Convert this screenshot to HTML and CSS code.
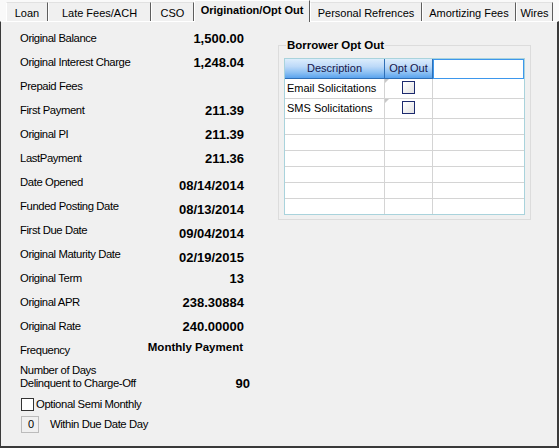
FILE: index.html
```html
<!DOCTYPE html>
<html>
<head>
<meta charset="utf-8">
<link rel="stylesheet" href="styles.css">
</head>
<body>
<div class="tabs">
  <div class="tab w-loan">Loan</div>
  <div class="tab w-late">Late Fees/ACH</div>
  <div class="tab w-cso">CSO</div>
  <div class="tab tab-sel w-orig">Origination/Opt Out</div>
  <div class="tab w-pers">Personal Refrences</div>
  <div class="tab w-amort">Amortizing Fees</div>
  <div class="tab w-wires">Wires</div>
</div>
<div class="panel">
  <div class="left">
    <div class="row"><span class="lbl">Original Balance</span><span class="val">1,500.00</span></div>
    <div class="row"><span class="lbl">Original Interest Charge</span><span class="val">1,248.04</span></div>
    <div class="row"><span class="lbl">Prepaid Fees</span><span class="val"></span></div>
    <div class="row"><span class="lbl">First Payment</span><span class="val">211.39</span></div>
    <div class="row"><span class="lbl">Original PI</span><span class="val">211.39</span></div>
    <div class="row"><span class="lbl">LastPayment</span><span class="val">211.36</span></div>
    <div class="row"><span class="lbl">Date Opened</span><span class="val low">08/14/2014</span></div>
    <div class="row"><span class="lbl">Funded Posting Date</span><span class="val low">08/13/2014</span></div>
    <div class="row"><span class="lbl">First Due Date</span><span class="val low">09/04/2014</span></div>
    <div class="row"><span class="lbl">Original Maturity Date</span><span class="val low">02/19/2015</span></div>
    <div class="row"><span class="lbl">Original Term</span><span class="val">13</span></div>
    <div class="row"><span class="lbl">Original APR</span><span class="val">238.30884</span></div>
    <div class="row"><span class="lbl">Original Rate</span><span class="val">240.00000</span></div>
    <div class="row row-freq"><span class="lbl">Frequency</span><span class="val val-small">Monthly Payment</span></div>
    <div class="row row-multi"><span class="lbl lbl-multi">Number of Days<br>Delinquent to Charge-Off</span><span class="val val-bottom">90</span></div>
    <div class="chkrow"><span class="chk"></span><span class="lbl">Optional Semi Monthly</span></div>
    <div class="inrow"><span class="numbox">0</span><span class="lbl">Within Due Date Day</span></div>
  </div>
  <div class="right">
    <div class="group">
      <div class="group-title">Borrower Opt Out</div>
      <div class="grid">
        <div class="grow ghead">
          <div class="c1 hcell">Description</div>
          <div class="c2 hcell">Opt Out</div>
          <div class="c3 hsel"></div>
        </div>
        <div class="grow gdata">
          <div class="c1 txt">Email Solicitations</div>
          <div class="c2 mark"><span class="gchk"></span></div>
          <div class="c3"></div>
        </div>
        <div class="grow gdata">
          <div class="c1 txt">SMS Solicitations</div>
          <div class="c2 mark"><span class="gchk"></span></div>
          <div class="c3"></div>
        </div>
        <div class="grow gempty"><div class="c1"></div><div class="c2"></div><div class="c3"></div></div>
        <div class="grow gempty"><div class="c1"></div><div class="c2"></div><div class="c3"></div></div>
        <div class="grow gempty"><div class="c1"></div><div class="c2"></div><div class="c3"></div></div>
        <div class="grow gempty"><div class="c1"></div><div class="c2"></div><div class="c3"></div></div>
        <div class="grow gempty"><div class="c1"></div><div class="c2"></div><div class="c3"></div></div>
        <div class="grow gempty glast"><div class="c1"></div><div class="c2"></div><div class="c3"></div></div>
      </div>
    </div>
  </div>
</div>
</body>
</html>
```
FILE: styles.css
```css
* { box-sizing: border-box; }
html, body {
  margin: 0;
  padding: 0;
}
body {
  width: 559px;
  height: 448px;
  overflow: hidden;
  background: #f0f0f0;
  font-family: "Liberation Sans", Arial, sans-serif;
  font-size: 11px;
  color: #000;
  display: flex;
  flex-direction: column;
}

/* Tabs */
.tabs {
  height: 21px;
  flex: none;
  display: flex;
  align-items: flex-end;
  padding-left: 6px;
  background: #f9f9f9;
}
.tab {
  flex: none;
  height: 19px;
  padding-top: 3px;
  line-height: 14px;
  text-align: center;
  white-space: nowrap;
  background: #f0f0f0;
  border-top: 1px solid #e1e1e1;
  border-left: 1px solid #ffffff;
  border-right: 1px solid #5e5e5e;
}
.tab-sel {
  height: 22px;
  margin-bottom: -1px;
  padding-top: 2px;
  font-weight: bold;
  border-top: 1px solid #ffffff;
  position: relative;
  z-index: 1;
}
.w-loan { width: 42px; }
.w-late { width: 103px; }
.w-cso { width: 43px; }
.w-orig { width: 116px; }
.w-pers { width: 112px; }
.w-amort { width: 94px; }
.w-wires { width: 37px; }

/* Panel */
.panel {
  flex: 1;
  display: flex;
  align-items: flex-start;
  border-top: 1px solid #ffffff;
  border-left: 1px solid #3a3a3a;
  border-right: 2px solid #3a3a3a;
  border-bottom: 2px solid #3a3a3a;
  background: #f0f0f0;
}

.left {
  width: 250px;
  flex: none;
  padding-top: 4px;
}
.row {
  height: 24px;
  display: flex;
  justify-content: space-between;
  align-items: center;
  padding-left: 19px;
  padding-right: 7px;
}
.lbl {
  font-size: 11.3px;
  letter-spacing: -0.4px;
  white-space: nowrap;
}
.val {
  font-size: 13px;
  font-weight: bold;
  white-space: nowrap;
}
.val.low { padding-top: 6px; }
.val-small {
  font-size: 11.5px;
  padding-bottom: 6px;
  padding-right: 1px;
}
.row-multi {
  height: 26px;
  margin-top: 2px;
  align-items: flex-end;
  padding-right: 1px;
}
.lbl-multi { line-height: 13px; }
.val-bottom { line-height: 13px; }

.chkrow {
  margin-top: 4px;
  height: 20px;
  display: flex;
  align-items: center;
  padding-left: 20px;
}
.chk {
  width: 13px;
  height: 13px;
  border: 1px solid #333333;
  background: #ffffff;
  margin-right: 2px;
  flex: none;
}
.inrow {
  height: 20px;
  display: flex;
  align-items: center;
  padding-left: 20px;
}
.numbox {
  width: 18px;
  height: 17px;
  flex: none;
  border: 1px solid #bcbcbc;
  background: #f0f0f0;
  text-align: right;
  padding-right: 4px;
  line-height: 15px;
  font-size: 11px;
  margin-right: 11px;
}

/* Right group */
.right {
  margin-left: 27px;
  margin-top: 23px;
  flex: none;
}
.group {
  width: 253px;
  border: 1px solid #dcdcdc;
  padding: 0 5px 4px 5px;
}
.group-title {
  width: fit-content;
  margin-top: -8px;
  margin-left: 2px;
  padding: 0 1px;
  height: 14px;
  line-height: 14px;
  font-size: 11.5px;
  font-weight: bold;
  background: #f0f0f0;
}
.grid {
  margin-top: 6px;
  width: 241px;
  border: 1px solid #a9d3dc;
  background: #ffffff;
}
.grow {
  display: flex;
}
.c1 { width: 100px; border-right: 1px solid #d4d4d4; flex: none; }
.c2 { width: 48px; border-right: 1px solid #d4d4d4; flex: none; }
.c3 { flex: 1; }

.ghead { height: 20px; }
.hcell {
  height: 20px;
  text-align: center;
  line-height: 19px;
  color: #15154a;
  background: linear-gradient(to bottom, #dcedfc 0%, #bcd9f8 40%, #8cc0f3 72%, #5aa3ee 100%);
  border-right: 1px solid #2f6fb6;
  border-bottom: 1px solid #2f6fb6;
}
.hsel {
  height: 20px;
  border: 1px solid #3d97ec;
  background: #ffffff;
}

.gdata { height: 20px; border-bottom: 1px solid #d4d4d4; }
.gdata .c1, .gdata .c2, .gdata .c3 { height: 19px; }
.txt {
  padding-left: 2px;
  padding-top: 1px;
  line-height: 16px;
  white-space: nowrap;
}
.mark {
  position: relative;
  display: flex;
  justify-content: center;
  padding-top: 2px;
}
.mark::before {
  content: "";
  position: absolute;
  left: 0;
  top: 0;
  border-top: 4px solid #c8c8c8;
  border-right: 4px solid transparent;
}
.gchk {
  width: 13px;
  height: 13px;
  border: 1px solid #1c2a6e;
  background: linear-gradient(135deg, #ffffff 0%, #f2f2f2 50%, #e2e2e2 100%);
}
.gempty { height: 16px; border-bottom: 1px solid #d4d4d4; }
.glast { height: 15px; border-bottom: none; }
```
